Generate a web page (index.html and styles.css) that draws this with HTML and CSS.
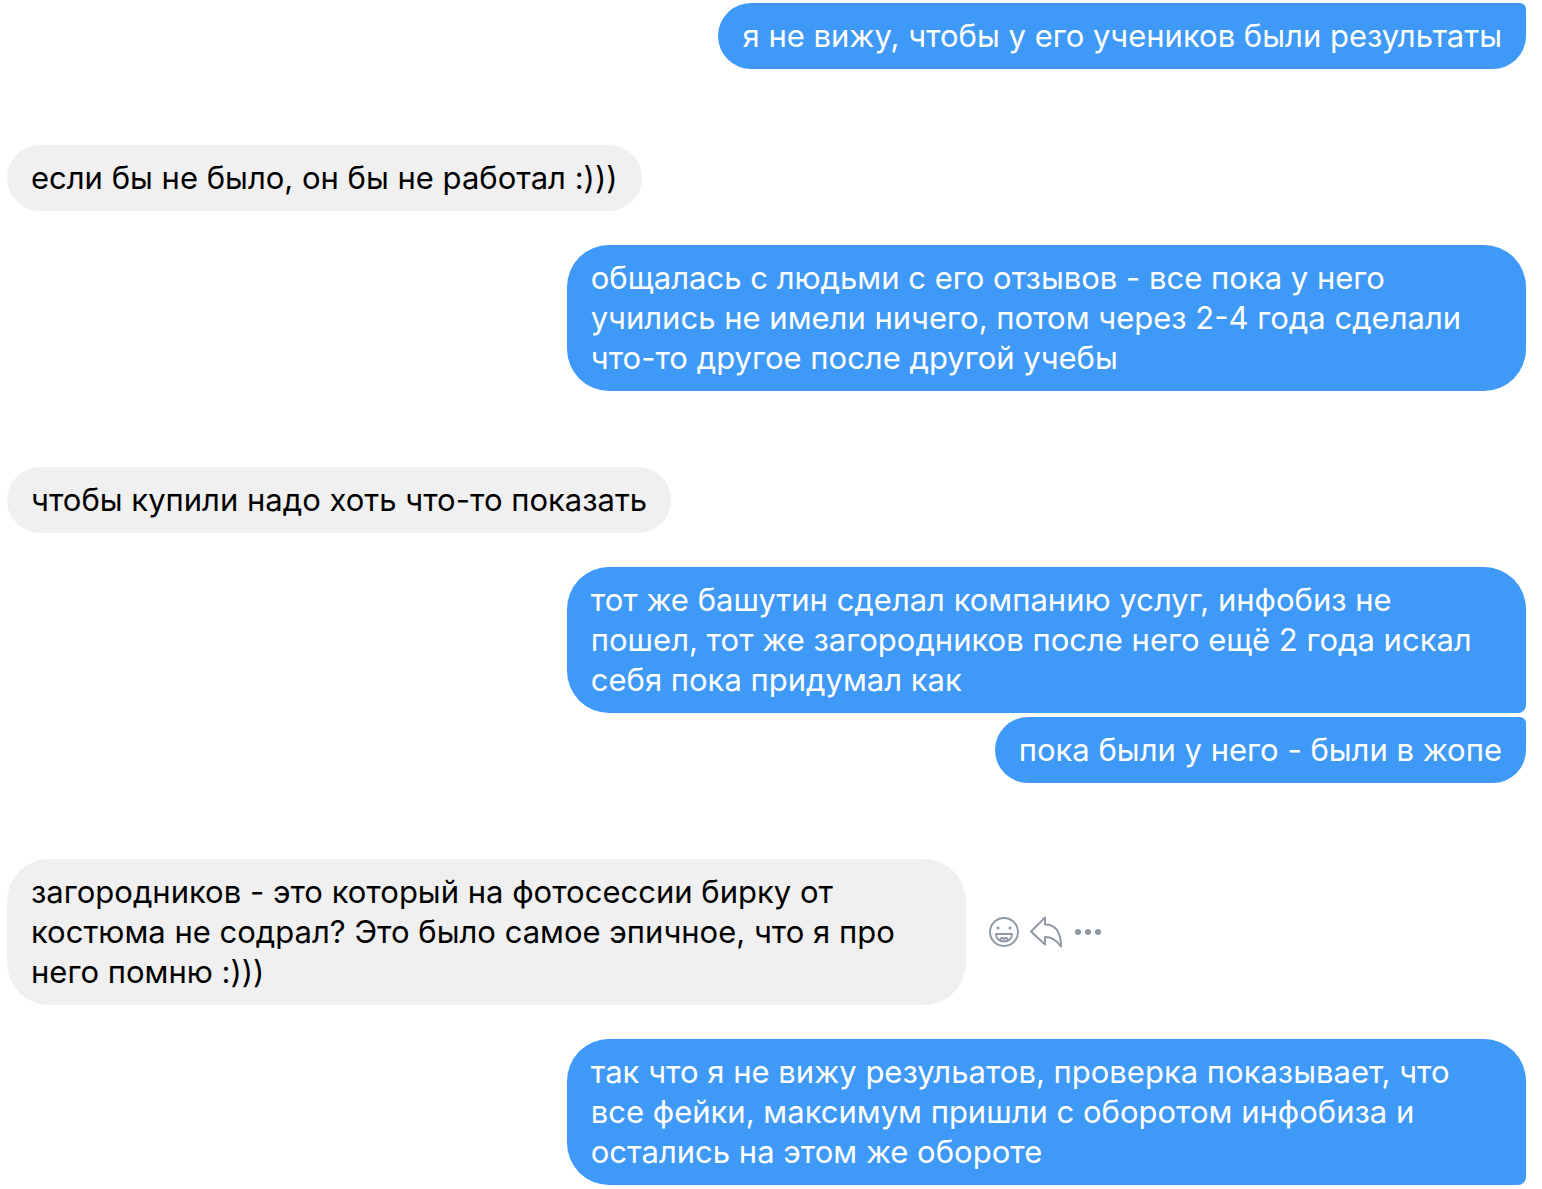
FILE: index.html
```html
<!DOCTYPE html>
<html lang="ru">
<head>
    <meta charset="UTF-8">
    <meta name="viewport" content="width=device-width, initial-scale=1.0">
    <title>Чат</title>
    <link rel="stylesheet" href="styles.css">
</head>
<body>
    <main class="chat">
        <div class="group outgoing">
            <div class="message">
                <p class="bubble joined-top">я не вижу, чтобы у его учеников были результаты</p>
            </div>
        </div>

        <div class="group incoming">
            <div class="message">
                <p class="bubble">если бы не было, он бы не работал :)))</p>
            </div>
        </div>

        <div class="group outgoing">
            <div class="message">
                <p class="bubble">общалась с людьми с его отзывов - все пока у него учились не имели ничего, потом через 2-4 года сделали что-то другое после другой учебы</p>
            </div>
        </div>

        <div class="group incoming">
            <div class="message">
                <p class="bubble">чтобы купили надо хоть что-то показать</p>
            </div>
        </div>

        <div class="group outgoing">
            <div class="message">
                <p class="bubble joined-bottom">тот же башутин сделал компанию услуг, инфобиз не пошел, тот же загородников после него ещё 2 года искал себя пока придумал как</p>
            </div>
            <div class="message">
                <p class="bubble joined-top">пока были у него - были в жопе</p>
            </div>
        </div>

        <div class="group incoming">
            <div class="message">
                <p class="bubble">загородников - это который на фотосессии бирку от костюма не содрал? Это было самое эпичное, что я про него помню :)))</p>
                <div class="actions">
                    <button type="button" aria-label="Реакция">
                        <svg width="32" height="32" viewBox="0 0 32 32">
                            <circle cx="16" cy="16" r="14"/>
                            <circle class="dot" cx="10" cy="12" r="1.5"/>
                            <circle class="dot" cx="22" cy="12" r="1.5"/>
                            <path d="M8 18h16c0 4.500-3.500 7.500-8 7.500S8 22.500 8 18z"/>
                            <path d="M12 24.500c.5-3 2.500-3 4-1.500 1.500-1.500 3.500-1.500 4 1.500"/>
                        </svg>
                    </button>
                    <button type="button" aria-label="Ответить">
                        <svg width="34" height="34" viewBox="0 0 34 34">
                            <path d="M16 2.500L2 16.500l14 13V22c7 0 11 3 16 9.500C32 18 27 9.500 16 9.500z"/>
                        </svg>
                    </button>
                    <button type="button" aria-label="Ещё">
                        <svg width="32" height="28" viewBox="0 0 32 28">
                            <circle class="dot" cx="6" cy="14" r="3"/>
                            <circle class="dot" cx="16" cy="14" r="3"/>
                            <circle class="dot" cx="26" cy="14" r="3"/>
                        </svg>
                    </button>
                </div>
            </div>
        </div>

        <div class="group outgoing">
            <div class="message">
                <p class="bubble joined-bottom">так что я не вижу резульатов, проверка показывает, что все фейки, максимум пришли с оборотом инфобиза и остались на этом же обороте</p>
            </div>
        </div>
    </main>
</body>
</html>
```
FILE: styles.css
```css
body {
    margin: 0;
    background-color: #fff;
    font-family: Inter, "Liberation Sans", sans-serif;
    font-size: 31px;
    line-height: 40px;
}
.chat {
    padding: 3px 16px 4px 7px;
}
.group {
    display: flex;
    flex-direction: column;
    gap: 4px;
}
.outgoing + .incoming {
    margin-top: 76px;
}
.incoming + .outgoing {
    margin-top: 34px;
}
.message {
    display: flex;
    align-items: center;
}
.outgoing .message {
    justify-content: flex-end;
}
.bubble {
    box-sizing: border-box;
    max-width: 63.15%;
    margin: 0;
    padding: 13px 24px;
    border-radius: 42px;
    background-color: #f0f0f0;
    color: #000;
}
.outgoing .bubble {
    background-color: #3f99f7;
    color: #fff;
}
/* bubbles of one author stick together on the right side */
.outgoing .joined-top {
    border-top-right-radius: 8px;
}
.outgoing .joined-bottom {
    border-bottom-right-radius: 8px;
}
.actions {
    display: flex;
    align-items: center;
    gap: 9px;
    margin-left: 22px;
}
.actions button {
    display: flex;
    padding: 0;
    border: none;
    background: none;
    color: #8f98a3;
    cursor: pointer;
}
.actions svg {
    fill: none;
    stroke: currentColor;
    stroke-width: 2;
    stroke-linejoin: round;
}
.actions .dot {
    fill: currentColor;
    stroke: none;
}
```
